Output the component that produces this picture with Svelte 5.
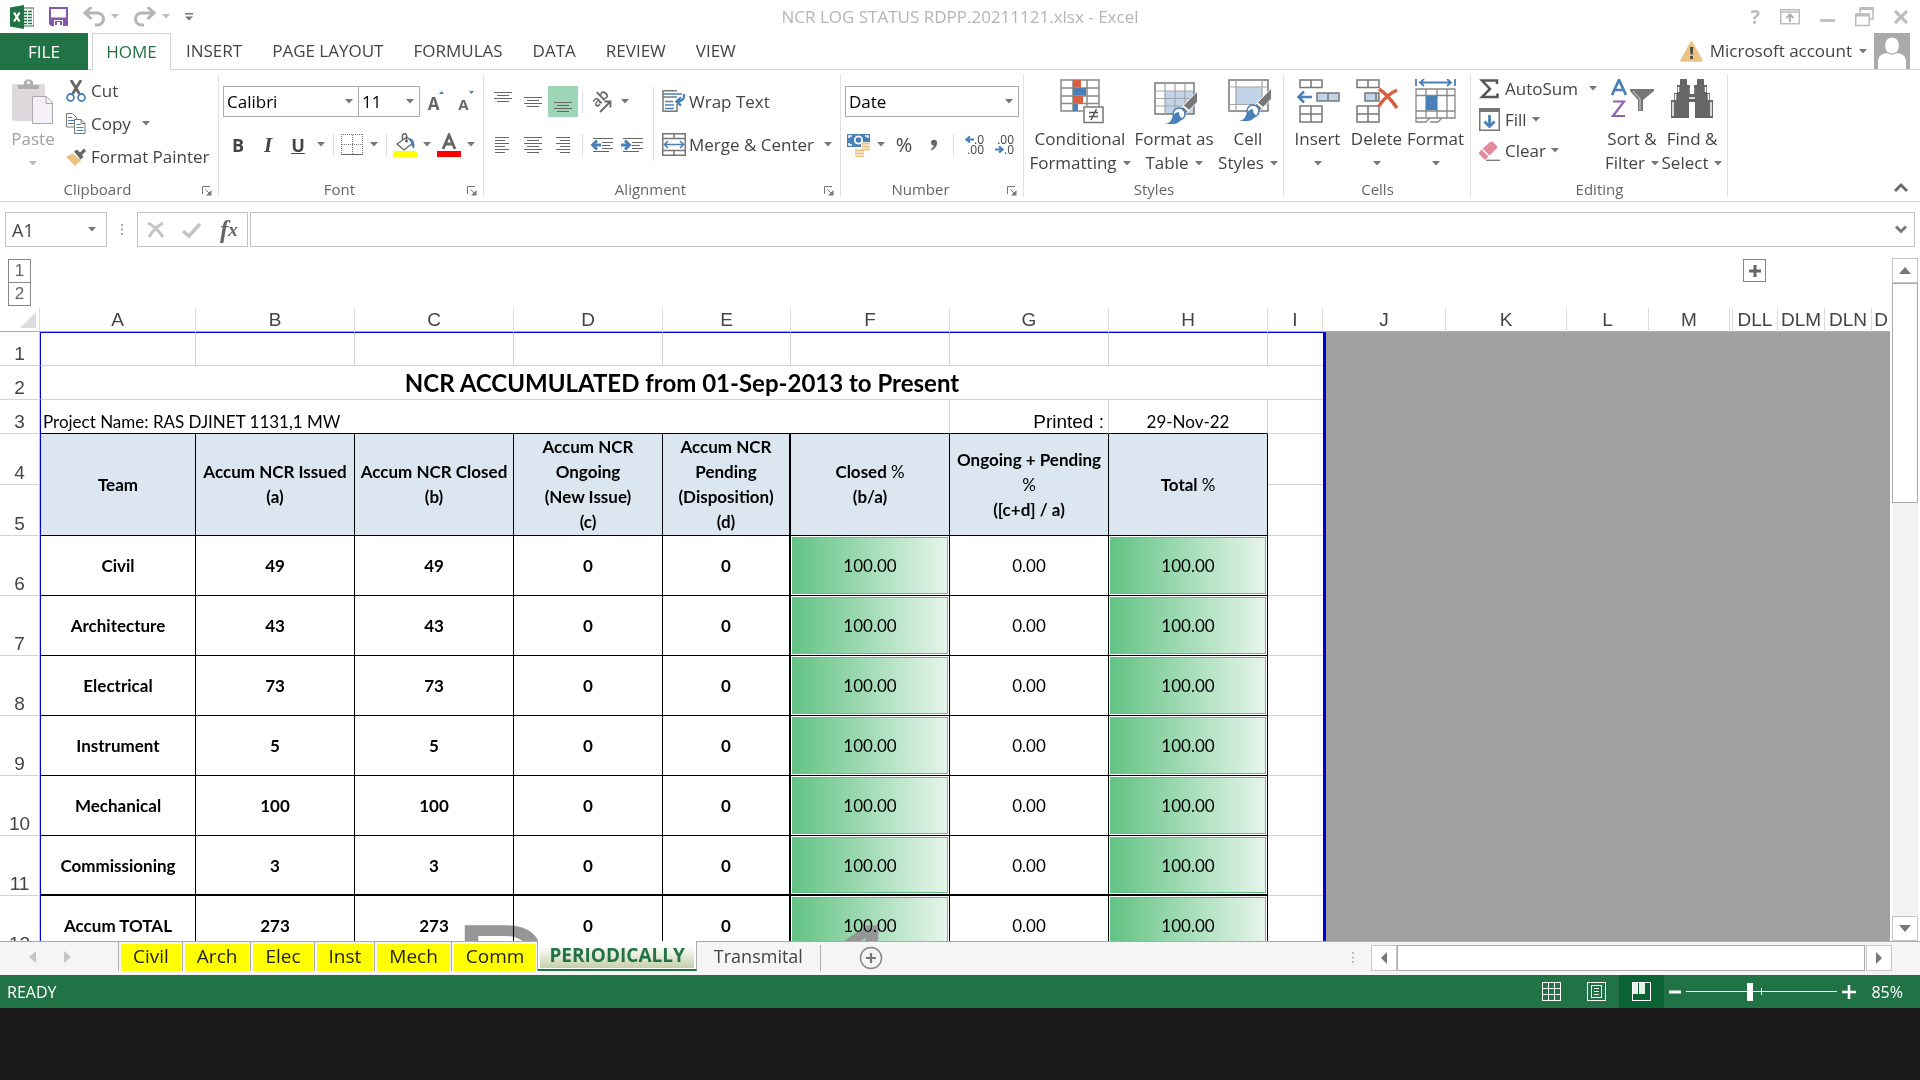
<script>
  const menu = ['INSERT', 'PAGE LAYOUT', 'FORMULAS', 'DATA', 'REVIEW', 'VIEW'];
  const letters = ['A', 'B', 'C', 'D', 'E', 'F', 'G', 'H', 'I', 'J', 'K', 'L', 'M', '', 'DLL', 'DLM', 'DLN', 'D'];
  const teams = [
    ['Civil', 49], ['Architecture', 43], ['Electrical', 73], ['Instrument', 5],
    ['Mechanical', 100], ['Commissioning', 3], ['Accum TOTAL', 273]
  ];
  const marked = ['Civil', 'Arch', 'Elec', 'Inst', 'Mech', 'Comm'];
  let zoom = $state(42);
</script>

{#snippet caret()}
  <svg class="caret" width="8" height="5" viewBox="0 0 8 5" aria-hidden="true"><path d="M0 0h8L4 4.5z" fill="currentColor" /></svg>
{/snippet}

{#snippet launcher(name)}
  <button class="launcher" aria-label="{name} settings">
    <svg width="10" height="10" viewBox="0 0 10 10"><path d="M.5 8V.5H8M3.500 3.500l4 4" fill="none" stroke="#777" /><path d="M9.500 4v5.500H4z" fill="#777" /></svg>
  </button>
{/snippet}

{#snippet lines(rows)}
  <svg width="20" height="20" viewBox="0 0 20 20" shape-rendering="crispEdges" aria-hidden="true">
    {#each rows as r}<path d="M{r[0]} {r[2]}.5H{r[1]}" stroke="#666" />{/each}
  </svg>
{/snippet}

<div class="app">
  <header class="title">
    <div class="quick">
      <svg class="logo" width="24" height="24" viewBox="0 0 24 24" aria-hidden="true">
        <path d="M12 3h12v18H12z" fill="#fff" stroke="#217346" />
        <path d="M14 6.500h3m1 0h4M14 9.500h3m1 0h4M14 12.500h3m1 0h4M14 15.500h3m1 0h4M14 18.500h3m1 0h4" stroke="#217346" stroke-width="1.500" />
        <path d="M0 2.500 14 0v24L0 21.500z" fill="#217346" />
        <path d="M4 7.500l5.500 9M9.500 7.500l-5.500 9" stroke="#fff" stroke-width="2.200" />
      </svg>
      <button class="save" aria-label="Save">
        <svg width="19" height="19" viewBox="0 0 19 19"><path d="M0 0h19v19H2l-2-2z" fill="#8657a8" /><path d="M2 2h15v8.500H2zM5 13h9v6H5z" fill="#fff" /><path d="M6 14h7v4h-2v-3H8v3H6z" fill="#8657a8" /></svg>
      </button>
      <button class="undo" aria-label="Undo">
        <svg width="22" height="20" viewBox="0 0 22 20"><path d="M2 6h12.500a6 6 0 0 1 0 12H12M8.500 0L2 6l6.500 6" fill="none" stroke="#b5b5b5" stroke-width="3" /></svg>
        {@render caret()}
      </button>
      <button class="undo" aria-label="Redo">
        <svg width="22" height="20" viewBox="0 0 22 20"><path d="M20 6H7.500a6 6 0 0 0 0 12H10M13.500 0L20 6l-6.500 6" fill="none" stroke="#b5b5b5" stroke-width="3" /></svg>
        {@render caret()}
      </button>
      <button class="custom" aria-label="Customize toolbar">
        <svg width="8" height="8" viewBox="0 0 8 8"><path d="M0 0h8v1.500H0zM0 3.500h8L4 7.500z" fill="#777" /></svg>
      </button>
    </div>
    <h1>NCR LOG STATUS RDPP.20211121.xlsx - Excel</h1>
    <div class="window">
      <button class="help">?</button>
      <button aria-label="Ribbon display options"><svg width="20" height="16" viewBox="0 0 20 16"><path d="M.75.75h18.500v14H.75zM1 3h18" fill="none" stroke="#bdbdbd" stroke-width="1.500" /><path d="M10 13V6M6.500 9L10 5.500 13.500 9" fill="none" stroke="#b0b0b0" stroke-width="2" /></svg></button>
      <button aria-label="Minimize"><svg width="15" height="16" viewBox="0 0 15 16"><path d="M0 10h15v3H0z" fill="#c3c3c3" /></svg></button>
      <button aria-label="Restore"><svg width="19" height="20" viewBox="0 0 19 20"><path d="M5 6V1h13v11H14" fill="none" stroke="#bdbdbd" stroke-width="1.500" /><path d="M5 1.500h13.500M1 8h13.500" stroke="#bdbdbd" stroke-width="3" /><path d="M.75 7h13.500v11.500H.75z" fill="none" stroke="#bdbdbd" stroke-width="1.500" /></svg></button>
      <button aria-label="Close"><svg width="14" height="14" viewBox="0 0 14 14"><path d="M1 1l12 12M13 1L1 13" stroke="#bdbdbd" stroke-width="3.200" /></svg></button>
    </div>
  </header>

  <nav class="tabs">
    <button class="file">FILE</button>
    <button class="home">HOME</button>
    {#each menu as item}<button class="tab">{item}</button>{/each}
    <button class="account">
      <svg width="23" height="21" viewBox="0 0 23 21" aria-hidden="true"><path d="M11.500 1.500L21.500 19.500H1.500z" fill="#eac282" stroke="#eac282" stroke-width="2.500" stroke-linejoin="round" /><path d="M10 6h3.200l-.6 7.500h-2zM10.200 15h2.600v3h-2.600z" fill="#444" /></svg>
      Microsoft account {@render caret()}
    </button>
    <svg class="avatar" width="36" height="36" viewBox="0 0 36 36" aria-hidden="true"><path d="M0 0h36v36H0z" fill="#aaa" /><ellipse cx="18" cy="12.500" rx="7" ry="8" fill="#fff" /><path d="M4 36v-9q1-6 9-7 5 3.500 10 0 8 1 9 7v9z" fill="#fff" /></svg>
  </nav>

  <section class="ribbon" aria-label="Home ribbon">
    <div class="group clip">
      <div class="body">
        <button class="big faded paste">
          <svg width="43" height="45" viewBox="0 0 43 45"><rect y="5" width="33" height="37" rx="2" fill="#dcd8dc" /><path d="M6 10V6h6V2.500Q16.500-2 21 2.500V6h6v4z" fill="#b0adb0" /><circle cx="16.500" cy="3.500" r="1.500" fill="#fff" /><path d="M20.500 17.500h14l6 6v21h-20z" fill="#f5f0f7" stroke="#aaa" /><path d="M34 17.500v7h7" fill="none" stroke="#aaa" /></svg>
          <span>Paste</span><span>{@render caret()}</span>
        </button>
        <div class="stack">
          <button class="small"><svg width="20" height="22" viewBox="0 0 20 22"><path d="M5 0l8.500 14M15 0L6.500 14" stroke="#666" stroke-width="2.800" /><circle cx="4.500" cy="17.500" r="3.500" fill="none" stroke="#4a80b8" stroke-width="1.800" /><circle cx="15.500" cy="17.500" r="3.500" fill="none" stroke="#4a80b8" stroke-width="1.800" /></svg>Cut</button>
          <button class="small"><svg width="20" height="21" viewBox="0 0 20 21"><path d="M.5.5h6l4 4v9.500H.5z" fill="#fff" stroke="#777" /><path d="M2 4.500h4m-4 3h6m-6 3h6" stroke="#4a80b8" /><path d="M8.500 6.500h6.500l4 4v10H8.500z" fill="#fff" stroke="#777" /><path d="M15 6.500v4h4" fill="none" stroke="#777" /><path d="M10.500 11.500h4m-4 3h7m-7 3h7" stroke="#4a80b8" /></svg>Copy<i></i>{@render caret()}</button>
          <button class="small"><svg width="20" height="19" viewBox="0 0 20 19"><path d="M0 9.500l7-3 8 7-6 5.500z" fill="#eac282" /><path d="M8 4.500l3-2 3 3 4-4 2 2.500-4 4 1.500 2-3 2.500z" fill="#666" /></svg>Format Painter</button>
        </div>
      </div>
      <div class="caption"><span>Clipboard</span>{@render launcher('Clipboard')}</div>
    </div>

    <div class="group font">
      <div class="body rows">
        <div class="row">
          <label class="combo wide"><select aria-label="Font"><option>Calibri</option></select>{@render caret()}</label>
          <label class="combo size"><select aria-label="Font size"><option>11</option></select>{@render caret()}</label>
          <button class="tool grow" aria-label="Increase font size"><b class="ga">A</b><svg width="5" height="3" viewBox="0 0 5 3"><path d="M0 3h5L2.500 0z" fill="#4a80b8" /></svg></button>
          <button class="tool shrink" aria-label="Decrease font size"><b class="gs">A</b><svg width="5" height="3" viewBox="0 0 5 3"><path d="M0 0h5L2.500 3z" fill="#4a80b8" /></svg></button>
        </div>
        <div class="row">
          <button class="tool bold">B</button>
          <button class="tool italic">I</button>
          <button class="tool underline">U</button>
          <button class="tool drop" aria-label="Underline styles">{@render caret()}</button>
          <hr />
          <button class="tool w28" aria-label="Borders"><svg width="22" height="22" viewBox="0 0 22 22" shape-rendering="crispEdges"><path d="M.5 0v20M21.500 0v20M0 .5h22M11 1v19M1 10.500h20" stroke="#777" stroke-dasharray="1 1" /><path d="M0 20.500h22" stroke="#666" /></svg></button>
          <button class="tool drop" aria-label="Border styles">{@render caret()}</button>
          <hr />
          <button class="tool w28" aria-label="Fill color"><svg width="24" height="24" viewBox="0 0 24 24"><path d="M14 4l-10 7 7 6 9-7z" fill="#fff" stroke="#666" stroke-width="1.300" /><path d="M9.500 7V2q2-3 4 0v6" fill="none" stroke="#666" stroke-width="1.500" /><circle cx="13.500" cy="8" r="1.500" fill="#666" /><path d="M16 5q7 1 5 11-3-3-3-6z" fill="#4a80b8" /><path d="M0 18h24v6H0z" fill="#ff0" /></svg></button>
          <button class="tool drop" aria-label="Fill palette">{@render caret()}</button>
          <button class="tool w28" aria-label="Font color"><svg width="24" height="24" viewBox="0 0 24 24"><path d="M6 16l6-14 6 14M8 11h8" fill="none" stroke="#666" stroke-width="2.800" /><path d="M0 18h24v6H0z" fill="#f00" /></svg></button>
          <button class="tool drop" aria-label="Font palette">{@render caret()}</button>
        </div>
      </div>
      <div class="caption"><span>Font</span>{@render launcher('Font')}</div>
    </div>

    <div class="group align">
      <div class="body">
        <div class="rows inner">
          <div class="row">
            <button class="tool w30" aria-label="Top align">{@render lines([[1, 19, 0], [4, 16, 3], [1, 19, 6], [4, 16, 9]])}</button>
            <button class="tool w30" aria-label="Middle align">{@render lines([[1, 19, 5], [4, 16, 8], [1, 19, 11], [4, 16, 14]])}</button>
            <button class="tool w30 on" aria-label="Bottom align">{@render lines([[1, 19, 10], [4, 16, 13], [1, 19, 16], [4, 16, 19]])}</button>
            <hr />
            <button class="tool w30" aria-label="Orientation"><svg width="24" height="24" viewBox="0 0 24 24"><text x="0" y="0" transform="translate(7 18) rotate(-45)" font-family="Open Sans" font-size="15" font-weight="600" fill="#666">ab</text><path d="M10 22L20 12M14.500 11.500H20.500V17.500" fill="none" stroke="#666" stroke-width="1.800" /></svg></button>
            <button class="tool drop" aria-label="Orientation options">{@render caret()}</button>
          </div>
          <div class="row">
            <button class="tool w30" aria-label="Align left">{@render lines([[2, 16, 2], [2, 12, 5], [2, 16, 8], [2, 12, 11], [2, 16, 14], [2, 12, 17]])}</button>
            <button class="tool w30" aria-label="Center">{@render lines([[1, 19, 2], [4, 16, 5], [1, 19, 8], [4, 16, 11], [1, 19, 14], [4, 16, 17]])}</button>
            <button class="tool w30" aria-label="Align right">{@render lines([[3, 17, 2], [7, 17, 5], [3, 17, 8], [7, 17, 11], [3, 17, 14], [7, 17, 17]])}</button>
            <hr />
            <button class="tool w30" aria-label="Decrease indent"><svg width="22" height="14" viewBox="0 0 22 14"><path d="M2 .5h20M11 4.500h11M11 7.500h8M11 10.500h11M2 13.500h16" stroke="#666" shape-rendering="crispEdges" /><path d="M10 7H3M6 2.500L1.500 7 6 11.500" fill="none" stroke="#4a80b8" stroke-width="3" /></svg></button>
            <button class="tool w30" aria-label="Increase indent"><svg width="22" height="14" viewBox="0 0 22 14"><path d="M2 .5h20M11 4.500h11M11 7.500h8M11 10.500h11M2 13.500h16" stroke="#666" shape-rendering="crispEdges" /><path d="M0 7h7M4 2.500L8.500 7 4 11.500" fill="none" stroke="#4a80b8" stroke-width="3" /></svg></button>
          </div>
        </div>
        <hr class="tall" />
        <div class="rows">
          <button class="small row"><svg width="24" height="23" viewBox="0 0 24 23"><path d="M15 .75H1v20.500h14V14M1 7h14" fill="none" stroke="#777" stroke-width="1.500" /><path d="M1 4h19M3 11.500h8M3 15h9M3 18.500h9" stroke="#4a80b8" stroke-width="1.500" /><path d="M22 4q1 7-6 7.500M19 7.500l-4.500 4 4.500 4" fill="none" stroke="#4a80b8" stroke-width="2.400" /></svg>Wrap Text</button>
          <button class="small row"><svg width="24" height="23" viewBox="0 0 24 23"><path d="M.75.75h22.500v21.500H.75zM1 5.500h22M1 17.500h22M12 1v4.500M12 17.500v5" fill="none" stroke="#777" stroke-width="1.500" /><path d="M3 11.500h18M6 8l-3.500 3.500L6 15M18 8l3.500 3.500L18 15" fill="none" stroke="#4a80b8" stroke-width="1.600" /></svg>Merge &amp; Center<i></i>{@render caret()}</button>
        </div>
      </div>
      <div class="caption"><span>Alignment</span>{@render launcher('Alignment')}</div>
    </div>

    <div class="group number">
      <div class="body rows">
        <div class="row"><label class="combo full"><select aria-label="Number format"><option>Date</option></select>{@render caret()}</label></div>
        <div class="row">
          <button class="tool w28" aria-label="Accounting format"><svg width="24" height="24" viewBox="0 0 24 24"><path d="M0 1h23v13H0z" fill="#4a80b8" /><path d="M2 5V3h3M18 3h3v2M2 10v2h3" fill="none" stroke="#fff" stroke-width="1.500" /><circle cx="11.500" cy="7" r="4.500" fill="#fff" /><circle cx="11.500" cy="7" r="2.800" fill="#4a80b8" /><path d="M14 9h9v9h-5v5H8v-7h6z" fill="#fff" /><path d="M15 10.500h8m-8 3h8m-8 3h8M8 17.500h9m-9 3h9m-9 3h9" stroke="#eac282" stroke-width="2" /></svg></button>
          <button class="tool drop" aria-label="Currency list">{@render caret()}</button>
          <button class="tool percent">%</button>
          <button class="tool w30" aria-label="Comma style"><svg width="8" height="12" viewBox="0 0 8 12"><path d="M1 3.500A3 3 0 0 1 7 4Q7 9 1.500 11.500L1 10Q4 8 3.500 6.500 1 6 1 3.500z" fill="#666" /></svg></button>
          <hr />
          <button class="tool dec"><span><svg width="9" height="7" viewBox="0 0 9 7"><path d="M9 3.500H3M5 .5L1.500 3.500l3.500 3" fill="none" stroke="#4a80b8" stroke-width="2.200" /></svg>.0</span><span>.00</span></button>
          <button class="tool dec"><span>.00</span><span><svg width="9" height="7" viewBox="0 0 9 7"><path d="M0 3.500h6M4 .5l3.500 3-3.500 3" fill="none" stroke="#4a80b8" stroke-width="2.200" /></svg>.0</span></button>
        </div>
      </div>
      <div class="caption"><span>Number</span>{@render launcher('Number')}</div>
    </div>

    <div class="group styles">
      <div class="body">
        <button class="big b1">
          <svg class="nudge" width="44" height="45" viewBox="0 0 44 45"><path d="M1 1h38v31H1zM1 9h38M1 17h38M1 24.500h38M13 1v31M27 1v31" fill="#fff" stroke="#888" stroke-width="1.500" /><path d="M13 1h8v7.500h-8zM13 17h10v7h-10z" fill="#d9603f" /><path d="M13 9h13v7.500H13zM13 25h5v7h-5z" fill="#4a80b8" /><path d="M23 27h21v18H23z" fill="#fff" /><path d="M24 28h19v15.500H24z" fill="#fff" stroke="#777" stroke-width="1.500" /><path d="M29 33.500h9m-9 4h9M36.500 30l-5.500 11" stroke="#555" stroke-width="1.500" /></svg>
          <span>Conditional</span><span>Formatting {@render caret()}</span>
        </button>
        <button class="big b2">
          <svg class="nudge" width="44" height="45" viewBox="0 0 44 45"><path d="M11 12h29v23H11z" fill="#c2d4e9" /><path d="M1 4h39v31H1z" fill="none" stroke="#777" stroke-width="1.500" /><path d="M1 12h39M1 19.500h39M1 27h39M11 4v31M21 4v31M31 4v31" stroke="#a5a5a5" stroke-width="1.200" /><path d="M43.500 12v11L31 35.500l-6-4.500z" fill="#777" stroke="#fff" /><path d="M29 27l6 5" stroke="#fff" stroke-width="2" /><circle cx="25" cy="35" r="6" fill="#fff" stroke="#4a80b8" stroke-width="1.500" /><path d="M11 45q6-1 7-6 2-6 7-6 0 5 3 6-3 6-9 6z" fill="#4a80b8" /></svg>
          <span>Format as</span><span>Table {@render caret()}</span>
        </button>
        <button class="big b3">
          <svg class="nudge" width="44" height="45" viewBox="0 0 44 45"><path d="M8 8h26v17H8z" fill="#c2d4e9" /><path d="M1 1h39v31H1z" fill="none" stroke="#777" stroke-width="1.500" /><path d="M1 8h39M1 25.500h39M8 1v31M34 1v31" stroke="#a5a5a5" stroke-width="1.200" /><path d="M43.500 9v11L31 32.500l-6-4.500z" fill="#777" stroke="#fff" /><path d="M29 24l6 5" stroke="#fff" stroke-width="2" /><circle cx="25" cy="32" r="6" fill="#fff" stroke="#4a80b8" stroke-width="1.500" /><path d="M11 42q6-1 7-6 2-6 7-6 0 5 3 6-3 6-9 6z" fill="#4a80b8" /></svg>
          <span>Cell</span><span>Styles {@render caret()}</span>
        </button>
      </div>
      <div class="caption"><span>Styles</span></div>
    </div>

    <div class="group cells">
      <div class="body">
        <button class="big b4">
          <svg width="44" height="45" viewBox="0 0 44 45"><path d="M4 1h22v7.500H4zM15 1v7.500M4 27h22v16H4zM15 27v16M4 35h22" fill="#fff" stroke="#777" stroke-width="1.500" /><path d="M21 14h22v8H21zM32 14v8" fill="#c2d4e9" stroke="#777" stroke-width="1.500" /><path d="M16 18H3M8 12.500L2.500 18 8 23.500" fill="none" stroke="#4a80b8" stroke-width="2.500" /></svg>
          <span>Insert</span><span>{@render caret()}</span>
        </button>
        <button class="big b4">
          <svg width="44" height="45" viewBox="0 0 44 45"><path d="M2 1h22v7.500H2zM13 1v7.500M2 27h22v16H2zM13 27v16M2 35h22" fill="#fff" stroke="#777" stroke-width="1.500" /><path d="M10 14h14v8H10zM21 14v8" fill="#c2d4e9" stroke="#777" stroke-width="1.500" /><path d="M24 10q9 6 18 19M42 11Q31 16 24 27" fill="none" stroke="#d9603f" stroke-width="3.500" /></svg>
          <span>Delete</span><span>{@render caret()}</span>
        </button>
        <button class="big b4">
          <svg width="44" height="45" viewBox="0 0 44 45"><path d="M2 0v7M41 0v7M6 3.500h31M10 0L6 3.500 10 7M33 0l4 3.500L33 7" fill="none" stroke="#4a80b8" stroke-width="1.800" /><path d="M2 10h39v29H2zM2 16.500h39M2 32h39M12 10v29M23 10v29M33 10v29" fill="#fff" stroke="#888" stroke-width="1.300" /><path d="M12 17h11v14H12z" fill="#4a80b8" /><path d="M2 39v4h10l4-4M16 43h8l4-4" fill="none" stroke="#888" stroke-width="1.300" /></svg>
          <span>Format</span><span>{@render caret()}</span>
        </button>
      </div>
      <div class="caption"><span>Cells</span></div>
    </div>

    <div class="group editing">
      <div class="body">
        <div class="stack edit">
          <button class="small"><svg width="21" height="20" viewBox="0 0 21 20"><path d="M18 5V1.500H3L11 10 3 18h15.500v-3.500" fill="none" stroke="#555" stroke-width="2.500" /></svg>AutoSum<i></i>{@render caret()}</button>
          <button class="small"><svg width="21" height="23" viewBox="0 0 21 23"><path d="M.75.75h19.500v21.500H.75z" fill="#fff" stroke="#777" stroke-width="1.500" /><path d="M0 0h21v4H0z" fill="#777" /><path d="M10.500 7v11M5.500 13.500l5 5 5-5" fill="none" stroke="#4a80b8" stroke-width="2.800" /></svg>Fill{@render caret()}</button>
          <button class="small"><svg width="21" height="20" viewBox="0 0 21 20"><path d="M0 11L11 1q2-1 3 0l4 4q1 1 0 2L7 18q-1 1-2 0L0 13z" fill="#e5899b" /><path d="M3.500 8.500l7 7" stroke="#fff" stroke-width="1.500" /><path d="M7 19.300h14" stroke="#777" stroke-width="1.300" /></svg>Clear{@render caret()}</button>
        </div>
        <button class="big b5">
          <svg width="44" height="45" viewBox="0 0 44 45"><path d="M2 16L9 1l7 15M5 11h8.500" fill="none" stroke="#4a80b8" stroke-width="2.700" /><path d="M3 22.500h11L3 37h12" fill="none" stroke="#8e63b5" stroke-width="2.200" /><path d="M20 10h24v2L33 21v11h-5V21L20 12z" fill="#777" /><path d="M23 12l7 8v11" fill="none" stroke="#ddd" /></svg>
          <span>Sort &amp;</span><span>Filter {@render caret()}</span>
        </button>
        <button class="big b5">
          <svg width="44" height="45" viewBox="0 0 44 45"><path d="M10 0h7v6h3v9h4V6h3V0h7v6h3v8h3v7h3v18H25V23h-6v16H1V21h3v-7h3V6h3z" fill="#666" /><path d="M8.500 8v5M5.500 15v6M3 23v14M35.500 8v5M38.500 15v6M41 23v14M20.500 9v5M23.500 9v5M19 19h6" stroke="#fff" stroke-width="1.500" /></svg>
          <span>Find &amp;</span><span>Select {@render caret()}</span>
        </button>
      </div>
      <div class="caption"><span>Editing</span></div>
    </div>
    <button class="collapse" aria-label="Collapse ribbon"><svg width="14" height="9" viewBox="0 0 14 9"><path d="M1 8l6-6 6 6" fill="none" stroke="#666" stroke-width="2.800" /></svg></button>
  </section>

  <div class="formula">
    <label class="namebox"><input aria-label="Name box" value="A1" />{@render caret()}</label>
    <svg class="dots" width="3" height="12" viewBox="0 0 3 12" aria-hidden="true"><path d="M0 0h2v2H0zM0 4.500h2v2H0zM0 9h2v2H0z" fill="#aaa" /></svg>
    <div class="fxbox">
      <button aria-label="Cancel"><svg width="18" height="16" viewBox="0 0 18 16"><path d="M1 1q9 5 15 14M16 1Q7 6 2 15" fill="none" stroke="#c3c3c3" stroke-width="3" /></svg></button>
      <button aria-label="Enter"><svg width="20" height="16" viewBox="0 0 20 16"><path d="M1 9l6 5L18 2" fill="none" stroke="#c3c3c3" stroke-width="3.500" /></svg></button>
      <button class="fx"><em>f</em><em class="x">x</em></button>
    </div>
    <div class="entry">
      <input aria-label="Formula" />
      <button aria-label="Expand formula bar"><svg width="12" height="9" viewBox="0 0 12 9"><path d="M1 1.500l5 5 5-5" fill="none" stroke="#777" stroke-width="3" /></svg></button>
    </div>
  </div>

  <main class="work">
    <div class="pane">
      <div class="outline">
        <div class="levels"><button>1</button><button>2</button></div>
        <button class="plus" aria-label="Expand columns"><svg width="12" height="12" viewBox="0 0 12 12"><path d="M6 0v12M0 6h12" stroke="#666" stroke-width="3" /></svg></button>
      </div>
      <div class="sheet">
        <table>
          <colgroup>
            <col class="c0" /><col class="cA" /><col class="c159" /><col class="c159" /><col class="cD" /><col class="cE" />
            <col class="c159" /><col class="c159" /><col class="c159" /><col class="cI" /><col class="cJ" /><col class="cK" />
            <col class="cL" /><col class="cM" /><col class="gap" /><col class="cDL" /><col class="cDM" /><col class="cDM" /><col />
          </colgroup>
          <thead>
            <tr>
              <th class="corner"><svg width="16" height="16" viewBox="0 0 16 16" aria-hidden="true"><path d="M16 0v16H0z" fill="#dcdcdc" /></svg></th>
              {#each letters as l}<th scope="col">{l}</th>{/each}
            </tr>
          </thead>
          <tbody>
            <tr class="r1">
              <th scope="row">1</th><td class="first"></td>
              {#each Array(7) as _}<td></td>{/each}
              <td class="edge"></td><td class="outside" rowspan="12" colspan="9"></td>
            </tr>
            <tr class="r2"><th scope="row">2</th><td class="first heading edge" colspan="9">NCR ACCUMULATED from 01-Sep-2013 to Present</td></tr>
            <tr class="r3">
              <th scope="row">3</th><td class="first project" colspan="6">Project Name: RAS DJINET 1131,1 MW</td>
              <td class="printed">Printed :</td><td class="date">29-Nov-22</td><td class="edge"></td>
            </tr>
            <tr class="r4">
              <th scope="row">4</th>
              <td rowspan="2" class="first h">Team</td>
              <td rowspan="2" class="h">Accum NCR Issued<br />(a)</td>
              <td rowspan="2" class="h">Accum NCR Closed<br />(b)</td>
              <td rowspan="2" class="h">Accum NCR<br />Ongoing<br />(New Issue)<br />(c)</td>
              <td rowspan="2" class="h thick">Accum NCR<br />Pending<br />(Disposition)<br />(d)</td>
              <td rowspan="2" class="h">Closed <span>%</span><br />(b/a)</td>
              <td rowspan="2" class="h">Ongoing + Pending<br /><span>%</span><br />([c+d] / a)</td>
              <td rowspan="2" class="h">Total <span>%</span></td>
              <td class="edge"></td>
            </tr>
            <tr class="r4"><th scope="row">5</th><td class="edge"></td></tr>
            {#each teams as [team, count], i}
              <tr class="data" class:last={i === 5}>
                <th scope="row">{i + 6}</th>
                <td class="first d">{team}</td><td class="d">{count}</td><td class="d">{count}</td><td class="d">0</td><td class="d thick">0</td>
                <td class="v"><div class="bar">100.00</div></td>
                <td class="v">0.00</td>
                <td class="v"><div class="bar">100.00</div></td>
                <td class="edge"></td>
              </tr>
            {/each}
          </tbody>
        </table>
        <div class="watermark" aria-hidden="true">Page 1</div>
      </div>
    </div>
    <div class="vscroll">
      <button aria-label="Scroll up"><svg width="12" height="7" viewBox="0 0 12 7"><path d="M0 7h12L6 0z" fill="#777" /></svg></button>
      <div class="vthumb"></div>
      <button class="down" aria-label="Scroll down"><svg width="12" height="7" viewBox="0 0 12 7"><path d="M0 0h12L6 7z" fill="#777" /></svg></button>
    </div>
  </main>

  <div class="sheets">
    <div class="move">
      <button aria-label="Previous sheet"><svg width="7" height="12" viewBox="0 0 7 12"><path d="M7 0v12L0 6z" fill="#c6c6c6" /></svg></button>
      <button aria-label="Next sheet"><svg width="7" height="12" viewBox="0 0 7 12"><path d="M0 0v12l7-6z" fill="#c6c6c6" /></svg></button>
    </div>
    {#each marked as name}<button class="mark"><span>{name}</span></button>{/each}
    <button class="active"><span>PERIODICALLY</span></button>
    <button class="plain">Transmital</button>
    <button class="add" aria-label="New sheet"><svg width="24" height="24" viewBox="0 0 24 24"><circle cx="12" cy="12" r="10.500" fill="none" stroke="#888" stroke-width="1.500" /><path d="M12 7v10M7 12h10" stroke="#777" stroke-width="2.200" /></svg></button>
    <svg class="grip" width="3" height="12" viewBox="0 0 3 12" aria-hidden="true"><path d="M0 0h2v2H0zM0 4.500h2v2H0zM0 9h2v2H0z" fill="#bbb" /></svg>
    <div class="hscroll">
      <button aria-label="Scroll left"><svg width="6" height="12" viewBox="0 0 6 12"><path d="M6 0v12L0 6z" fill="#777" /></svg></button>
      <div class="hthumb"></div>
      <button aria-label="Scroll right"><svg width="6" height="12" viewBox="0 0 6 12"><path d="M0 0v12l6-6z" fill="#777" /></svg></button>
    </div>
  </div>

  <footer class="status">
    <span class="ready">READY</span>
    <button class="view" aria-label="Normal view"><svg width="20" height="20" viewBox="0 0 20 20" shape-rendering="crispEdges"><path d="M.5.5h18v18H.5zM6.500 0v19M12.500 0v19M0 6.500h19M0 12.500h19" fill="none" stroke="#fff" /></svg></button>
    <button class="view" aria-label="Page layout view"><svg width="20" height="20" viewBox="0 0 20 20" shape-rendering="crispEdges"><path d="M.5.5h18v18H.5zM4.500 3.500h10v12h-10zM7 6.500h5M7 9.500h5M7 12.500h5" fill="none" stroke="#fff" /></svg></button>
    <button class="view current" aria-label="Page break view"><svg width="20" height="20" viewBox="0 0 20 20" shape-rendering="crispEdges"><path d="M.5.5h18v18H.5z" fill="none" stroke="#fff" /><path d="M1 1h5v11H1zM7 1h6v11H7z" fill="#e8f0ec" /></svg></button>
    <button class="step" aria-label="Zoom out"><svg width="12" height="14" viewBox="0 0 12 14"><path d="M0 7h12" stroke="#fff" stroke-width="3" /></svg></button>
    <input class="zoom" type="range" min="0" max="100" bind:value={zoom} aria-label="Zoom" />
    <button class="step" aria-label="Zoom in"><svg width="14" height="14" viewBox="0 0 14 14"><path d="M0 7h14M7 0v14" stroke="#fff" stroke-width="2.500" /></svg></button>
    <button class="pct">85%</button>
  </footer>
  <div class="taskbar"></div>
</div>

<style>
  :global(body) { margin: 0; background: #1a1a1a; }
  .app { display: flex; flex-direction: column; height: 100vh; overflow: hidden; background: #fff; color: #444; font-family: 'Open Sans', 'Noto Sans', sans-serif; font-size: 17px; line-height: 24px; }
  .app * { box-sizing: border-box; }
  button, input, select { margin: 0; padding: 0; border: 0; background: none; color: inherit; font: inherit; appearance: none; outline: 0; border-radius: 0; }
  button { white-space: nowrap; }
  svg { display: block; flex: none; }
  .caret { color: #777; }
  h1 { margin: 0; font-size: 17px; line-height: 24px; font-weight: 400; color: #b5b5b5; }

  .title { display: grid; grid-template-columns: 1fr auto 1fr; flex: none; height: 33px; align-items: center; }
  .quick { display: flex; align-items: center; padding-left: 10px; height: 30px; }
  .save { margin-left: 15px; }
  .undo { display: flex; align-items: center; gap: 6px; margin-left: 15px; }
  .undo .caret { color: #bbb; }
  .custom { margin-left: 15px; }
  .window { display: flex; align-items: center; justify-content: flex-end; gap: 20px; padding-right: 12px; height: 30px; }
  .help { color: #bdbdbd; font-size: 20px; font-weight: 700; }

  .tabs { display: flex; flex: none; height: 37px; border-bottom: 1px solid #d4d4d4; }
  .file { width: 88px; height: 37px; background: #217346; color: #fff; margin-right: 4px; }
  .home { width: 79px; height: 37px; border: 1px solid #d4d4d4; border-bottom: 0; background: #fff; color: #217346; }
  .tab { padding: 0 15px; }
  .account { display: flex; align-items: center; gap: 7px; margin-left: auto; margin-right: 7px; }
  .avatar { margin-right: 10px; }

  .ribbon { display: flex; flex: none; height: 132px; border-bottom: 1px solid #d4d4d4; }
  .group { display: flex; flex-direction: column; flex: none; padding-bottom: 1px; background: linear-gradient(#e1e1e1, #e1e1e1) right 4px / 1px 123px no-repeat; }
  .clip { width: 219px; }
  .font { width: 265px; }
  .align { width: 357px; }
  .number { width: 183px; }
  .styles { width: 260px; }
  .cells { width: 187px; }
  .editing { width: 257px; }
  .body { display: flex; height: 108px; align-items: flex-start; }
  .caption { display: grid; grid-template-columns: 1fr; align-items: center; font-size: 15px; line-height: 22px; height: 22px; color: #666; text-align: center; }
  .caption > * { grid-area: 1 / 1; }
  .clip .caption span, .font .caption span, .align .caption span, .number .caption span { padding-right: 24px; }
  .launcher { justify-self: end; padding: 4px 7px 0 0; }
  .big { display: flex; flex-direction: column; align-items: center; padding-top: 9px; }
  .big > svg { margin-bottom: 3px; }
  .big > .nudge { margin-left: 4px; }
  .big span { display: flex; align-items: center; justify-content: center; gap: 6px; height: 24px; }
  .faded { color: #a0a0a0; }
  .faded .caret { color: #bbb; }
  .paste { width: 66px; }
  .styles .body, .cells .body { padding-left: 4px; }
  .b1 { width: 104px; }
  .b2 { width: 84px; }
  .b3 { width: 64px; }
  .b4 { width: 59px; }
  .b5 { width: 60px; }
  .stack { display: flex; flex-direction: column; padding-top: 4px; }
  .small { display: flex; align-items: center; gap: 5px; height: 33px; }
  .small i { width: 1px; }
  .edit { width: 131px; padding: 3px 0 0 8px; }
  .edit .small { height: 31px; }
  .rows { flex-direction: column; gap: 12px; padding-top: 16px; }
  div.rows { display: flex; }
  .row { display: flex; align-items: center; height: 31px; }
  button.row { gap: 3px; }
  button.row i { width: 4px; }
  .combo { display: grid; grid-template-columns: 1fr 16px; align-items: center; height: 31px; border: 1px solid #ababab; color: #000; }
  .combo select { grid-area: 1 / 1 / 2 / 3; height: 29px; padding-left: 3px; }
  .combo .caret { grid-area: 1 / 2; margin-left: 3px; }
  .wide { width: 136px; }
  .size { width: 61px; border-left: 0; }
  .full { width: 174px; }
  .font .body, .number .body { padding-left: 4px; }
  .tool { display: flex; align-items: center; justify-content: center; height: 31px; }
  .tool b { line-height: 24px; padding-top: 6px; color: #666; }
  .grow, .shrink { width: 30px; align-items: flex-start; }
  .grow { margin-left: 1px; }
  .grow svg, .shrink svg { margin-top: 5px; }
  .ga { font-size: 17px; }
  .gs { font-size: 15px; }
  .bold, .italic, .underline { width: 30px; font-weight: 700; font-size: 18px; }
  .italic { font-family: 'Liberation Serif', serif; font-style: italic; font-size: 21px; }
  .underline { text-decoration: underline; }
  .drop { width: 16px; }
  .w28 { width: 28px; }
  .w30 { width: 30px; }
  .on { background: #9fd5b7; }
  hr { width: 1px; height: 22px; margin: 0 4px; border: 0; background: #dcdcdc; flex: none; }
  .inner { width: 169px; }
  .inner .row { padding-left: 4px; }
  .tall { height: 74px; margin: 17px 8px 0 0; }
  .percent { width: 30px; font-size: 20px; }
  .dec { flex-direction: column; width: 30px; align-items: flex-end; padding-right: 4px; font-size: 12px; line-height: 10px; }
  .dec span { display: flex; align-items: center; }
  .collapse { margin-left: auto; align-self: flex-end; padding: 0 12px 9px 0; }

  .formula { display: flex; flex: none; height: 45px; padding: 10px 5px 0; }
  .namebox { display: flex; align-items: center; width: 102px; border: 1px solid #c3c3c3; padding: 0 10px 0 6px; }
  .namebox input { width: 100%; flex: 1; min-width: 0; font-size: 18px; }
  .dots { margin: 12px 13px 0 14px; }
  .fxbox { display: flex; align-items: center; width: 111px; border: 1px solid #c3c3c3; margin-right: 2px; }
  .fxbox button { display: flex; justify-content: center; flex: 1; }
  .fx { font-family: 'Liberation Serif', serif; font-size: 25px; font-weight: 700; color: #666; }
  .fx .x { font-size: 19px; }
  .entry { display: flex; flex: 1; align-items: center; border: 1px solid #c3c3c3; padding-right: 7px; }
  .entry input { flex: 1; }

  .work { display: flex; flex: 1; min-height: 0; }
  .pane { display: flex; flex: 1; min-width: 0; flex-direction: column; }
  .outline { display: flex; flex: none; height: 61px; justify-content: space-between; padding: 12px 124px 0 8px; }
  .levels { display: flex; flex-direction: column; }
  .levels button { width: 23px; height: 24px; border: 1px solid #83878c; font-family: 'Liberation Sans', sans-serif; font-size: 17px; line-height: 22px; color: #666; }
  .levels button + button { margin-top: -1px; }
  .plus { display: grid; place-content: center; width: 23px; height: 23px; border: 1px solid #83878c; }
  .sheet { position: relative; flex: 1; min-height: 0; overflow: hidden; }
  table { width: 100%; table-layout: fixed; border-collapse: separate; border-spacing: 0; font-family: Lato, sans-serif; font-size: 17px; line-height: 25px; color: #000; }
  .c0 { width: 40px; } .cA { width: 156px; } .c159 { width: 159px; } .cD { width: 149px; } .cE { width: 128px; }
  .cI { width: 55px; } .cJ { width: 123px; } .cK { width: 121px; } .cL { width: 82px; } .cM { width: 81px; } .gap { width: 3px; }
  .cDL { width: 45px; } .cDM { width: 47px; }
  td, th { padding: 0; overflow: hidden; }
  th { font-family: 'Liberation Sans', sans-serif; font-size: 19px; line-height: 22px; font-weight: 400; color: #444; white-space: nowrap; }
  thead th { height: 24px; border-bottom: 1px solid #ababab; border-right: 1px solid #dcdcdc; }
  thead th:last-child { border-right: 0; }
  .corner svg { margin-left: 20px; }
  tbody th { vertical-align: bottom; border-right: 1px solid #c6c6c6; border-bottom: 1px solid #d4d4d4; }
  td { border-right: 1px solid #d4d4d4; border-bottom: 1px solid #d4d4d4; text-align: center; white-space: nowrap; }
  td.first { border-left: 1px solid #0000d0; }
  td.edge { border-right: 0; }
  td.outside { background: #a0a0a0; border: 0; border-left: 3px solid #0000d0; }
  .r1 td:not(.outside) { border-top: 1px solid #0000d0; }
  .r1 > *, .r2 > *, .r3 > * { height: 34px; }
  td.heading { font-size: 24px; font-weight: 700; }
  .r3 td { vertical-align: bottom; }
  .r3 td:not(.edge) { border-bottom-color: #000; }
  td.project { text-align: left; padding-left: 2px; line-height: 22px; }
  td.printed { text-align: right; padding-right: 4px; font-family: 'Liberation Sans', sans-serif; font-size: 19px; line-height: 22px; }
  td.date { line-height: 22px; }
  .r4 > th, .r4 > .edge { height: 51px; }
  td.h { background: #dce6f1; font-weight: 700; border-color: #000; padding-bottom: 1px; }
  td.h span { font-weight: 400; }
  td.h.first, td.d.first { border-left-color: #0000d0; }
  td.thick { border-right-width: 2px; }
  .data > * { height: 60px; }
  td.d, td.v { border-color: #000; }
  td.d { font-weight: 700; }
  .last td.d, .last td.v { border-bottom-width: 2px; }
  .bar { display: grid; place-content: center; margin: 1px; height: 57px; border: 1px solid #63c384; background: linear-gradient(90deg, #63c384, #e6f5eb); }
  .last .bar { height: 56px; }
  .watermark { position: absolute; left: 453px; top: 585px; font-family: 'Liberation Sans', sans-serif; font-size: 144px; line-height: 166px; color: #969696; mix-blend-mode: darken; pointer-events: none; white-space: nowrap; }

  .vscroll { display: flex; flex-direction: column; flex: none; width: 26px; margin: 11px 2px 0; background: #f3f3f3; }
  .vscroll button { display: grid; place-content: center; height: 25px; border: 1px solid #c6c6c6; background: #fff; }
  .vthumb { height: 220px; border: 1px solid #ababab; background: #fff; }
  .vscroll .down { margin-top: auto; }

  .sheets { display: flex; flex: none; height: 34px; border-top: 1px solid #ababab; background: #f5f5f5; font-size: 19px; }
  .move { display: flex; align-items: center; gap: 28px; width: 119px; padding-left: 29px; border-right: 1px solid #ababab; margin-bottom: 4px; }
  .mark { height: 29px; padding: 2px 1px 0 2px; border-right: 1px solid #ababab; color: #222; }
  .mark span { display: block; height: 27px; line-height: 25px; padding: 0 12px; background: #ff0; }
  .active { height: 30px; margin-top: -1px; background: #fff; border-right: 1px solid #ababab; border-bottom: 2px solid #217346; color: #217346; font-weight: 700; }
  .active span { display: block; margin: 0 2px 1px; padding: 0 9px; height: 27px; line-height: 29px; background: linear-gradient(#fff 20%, #c4cfaa); }
  .plain { height: 26px; margin-top: 3px; padding: 0 17px 4px; border-right: 1px solid #ababab; line-height: 20px; font-size: 18px; }
  .add { margin-left: 38px; height: 32px; }
  .grip { margin: 10px 16px 0 auto; }
  .hscroll { display: flex; width: 521px; margin: 3px 28px 4px 0; }
  .hscroll button { display: grid; place-content: center; width: 26px; border: 1px solid #c6c6c6; background: #fff; }
  .hthumb { flex: 1; border: 1px solid #ababab; background: #fff; margin-right: 1px; }

  .status { display: flex; align-items: center; flex: none; height: 33px; background: #217346; color: #fff; font-size: 16px; line-height: 22px; }
  .ready { margin: 0 auto 0 7px; }
  .view { display: grid; place-content: center; width: 45px; height: 33px; }
  .current { background: #0a6332; }
  .step { margin: 0 5px; }
  .zoom { width: 151px; height: 18px; background: linear-gradient(#fff, #fff) center / 100% 1px no-repeat, linear-gradient(#fff, #fff) center / 1px 7px no-repeat; }
  .zoom::-webkit-slider-thumb { appearance: none; width: 6px; height: 18px; background: #fff; }
  .pct { margin: 0 17px 0 10px; }
  .taskbar { flex: none; height: 72px; background: #1a1a1a; }
</style>
